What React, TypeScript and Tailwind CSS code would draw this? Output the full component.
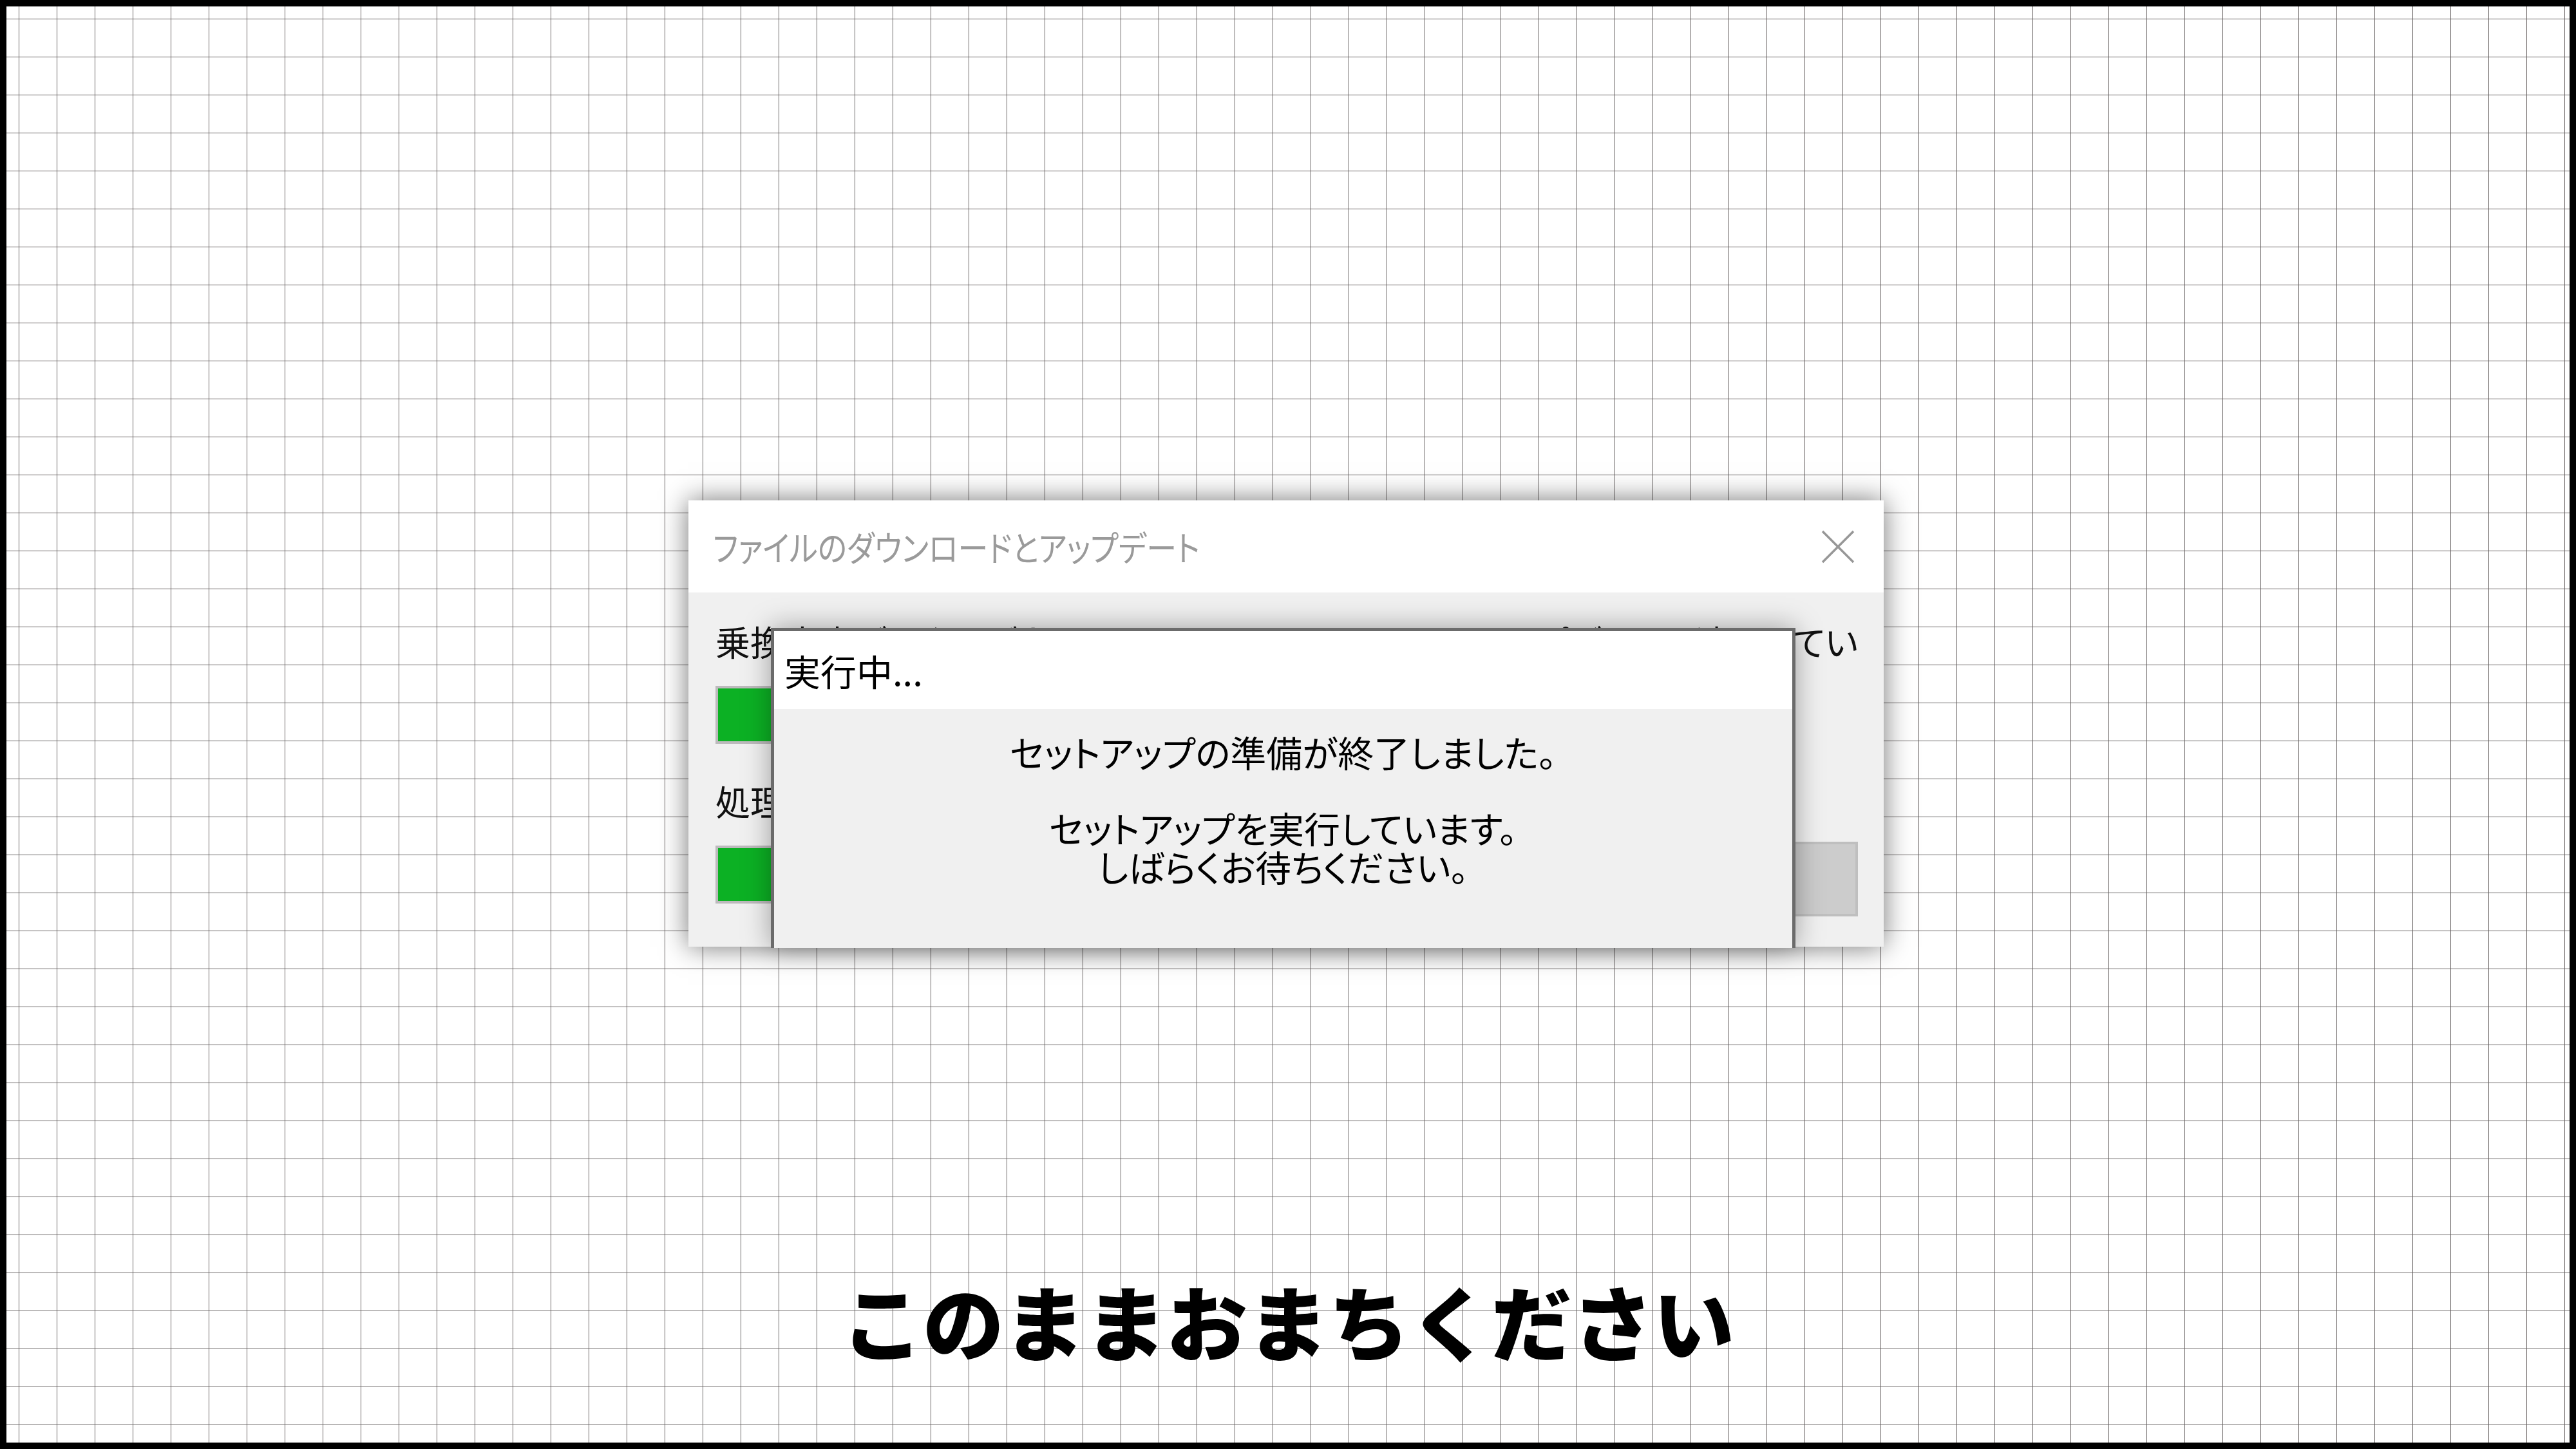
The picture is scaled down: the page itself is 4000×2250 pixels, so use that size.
const jp = "font-['Noto_Sans_CJK_JP',sans-serif]";

const Bar = ({ className = "" }: { className?: string }) => (
  <div className={`h-[90px] w-[1450px] border-4 border-[#bdbabd] bg-[#0cb124] ${className}`} />
);

const CloseIcon = () => (
  <svg width="52" height="52" viewBox="0 0 52 52" className="shrink-0">
    <path d="M2 2 L50 50 M50 2 L2 50" stroke="#979797" strokeWidth="3.5" fill="none" />
  </svg>
);

export default function App() {
  return (
    <div
      className={`w-[4000px] h-[2250px] border-[10px] border-black bg-white bg-[linear-gradient(to_right,#666161_1px,transparent_1px),linear-gradient(to_bottom,#666161_1px,transparent_1px)] bg-[size:59px_59px] bg-[position:19px_19px] flex flex-col ${jp}`}
    >
      {/* back window: download & update */}
      <div className="relative ml-[1059px] mt-[767px] w-[1856px] h-[693px] flex flex-col bg-[#f0f0f0] shadow-[0_0_40px_rgba(0,0,0,0.55)]">
        <div className="h-[143px] shrink-0 bg-white flex items-center justify-between pl-[38px] pr-[45px]">
          <span className="inline-block origin-left scale-x-[0.87] text-[54px] leading-none text-[#9a9a9a] [font-feature-settings:'palt']">
            ファイルのダウンロードとアップデート
          </span>
          <CloseIcon />
        </div>

        <div className="flex-1 pl-[42px] pr-[40px] pt-[46px] text-[54px] leading-[60px] text-[#111] [font-feature-settings:'palt']">
          <p className="flex justify-between whitespace-nowrap">
            <span>乗換案内データのダウンロード</span>
            <span>ファイルのアップデートを適用してい</span>
          </p>
          <Bar className="mt-[39px]" />
          <p className="mt-[59px]">処理中のファイル</p>
          <div className="mt-[33px] flex items-start justify-between">
            <Bar className="mt-[6px]" />
            <div className="w-[300px] h-[116px] border-4 border-[#bfbfbf] bg-[#cccccc] flex items-center justify-center text-[46px] text-[#8a8a8a]">
              中止
            </div>
          </div>
        </div>

        {/* front window: running setup */}
        <div className="absolute left-[128px] top-[198px] w-[1591px] h-[497px] border-[5px] border-b-0 border-[#6b6b6b] bg-[#f0f0f0] shadow-[0_0_40px_rgba(0,0,0,0.35)] flex flex-col">
          <div className="h-[121px] shrink-0 bg-white flex items-center pl-[16px] text-[56px] leading-none text-black">
            実行中...
          </div>
          <div className="pt-[36px] text-center text-[56px] leading-[60px] text-black [font-feature-settings:'palt']">
            <p>セットアップの準備が終了しました。</p>
            <p className="mt-[58px]">
              セットアップを実行しています。
              <br />
              しばらくお待ちください。
            </p>
          </div>
        </div>
      </div>

      <p className="mt-[516px] text-center text-[126px] leading-none font-black text-black">
        このままおまちください
      </p>
    </div>
  );
}
